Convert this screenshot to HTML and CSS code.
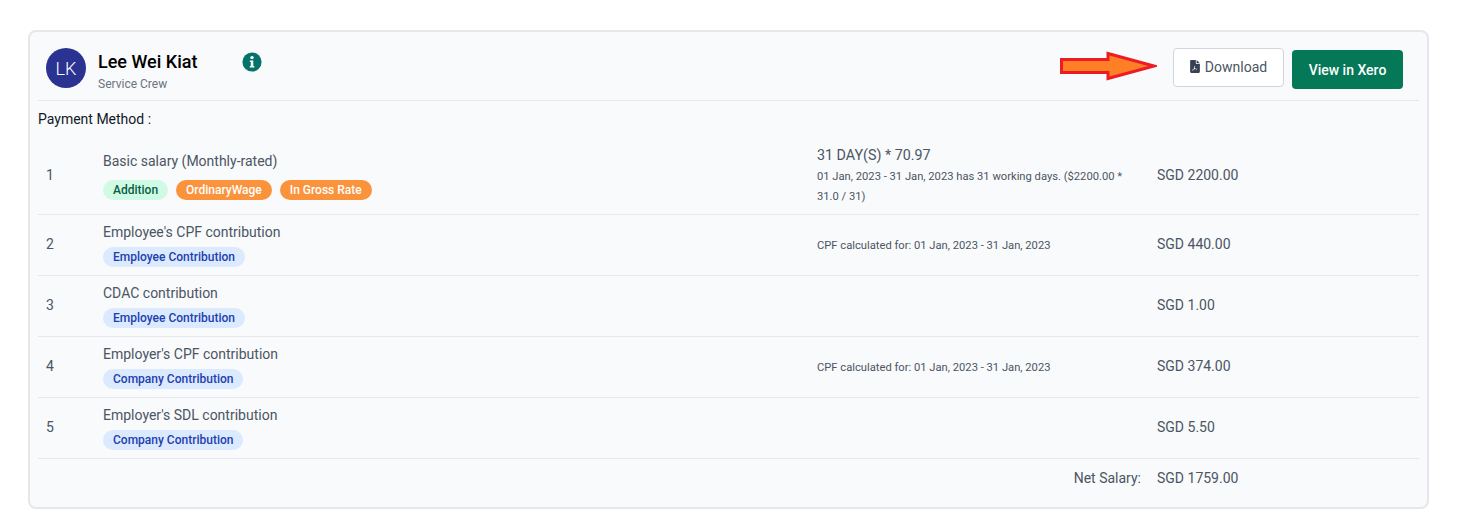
FILE: index.html
```html
<!DOCTYPE html>
<html lang="en">
<head>
<meta charset="utf-8">
<title>Payslip</title>
<link rel="stylesheet" href="styles.css">
</head>
<body>
<section class="card">
  <header class="head">
    <div class="avatar">LK</div>
    <div class="who">
      <div class="name">Lee Wei Kiat</div>
      <div class="role">Service Crew</div>
    </div>
    <svg class="info" viewBox="0 0 20 20" width="20" height="20"><circle cx="10" cy="10" r="9.6" fill="#04746a"/><circle cx="10" cy="5.6" r="1.7" fill="#fff"/><path d="M7.800 8.600h3.500v5.300h1v1.500H7.800v-1.500h1v-3.800h-1z" fill="#fff"/></svg>
    <div class="actions">
      <svg class="arrow" viewBox="0 0 98 30" width="98" height="30"><path d="M2.500 8.500H49V2.500L95 15 49 27.500V21.500H2.500z" fill="#ff7f27" stroke="#ed1c24" stroke-width="3"/></svg>
      <button class="btn btn-light"><svg viewBox="0 0 384 512" width="10" height="13"><path fill="#374151" d="M224 0H48C22 0 0 22 0 48v416c0 26 22 48 48 48h288c26 0 48-22 48-48V160H256c-18 0-32-14-32-32zm32 0v128h128zM96 416c-20 0-24-14-6-28 14-10 32-18 44-22 12-20 24-46 30-66-10-26-14-50-6-62 8-10 24-6 26 14 2 12-2 30-6 48 10 20 24 36 38 46 22-2 50-2 58 10 8 14-6 24-22 22-14-2-30-10-46-22-20 2-44 10-64 18-16 28-32 42-46 42z"/></svg>Download</button>
      <button class="btn btn-green">View in Xero</button>
    </div>
  </header>
  <div class="method">Payment Method :</div>
  <div class="row row-first">
    <div class="num">1</div>
    <div class="item">
      <div class="label">Basic salary (Monthly-rated)</div>
      <div class="tags"><span class="tag tag-green">Addition</span><span class="tag tag-orange">OrdinaryWage</span><span class="tag tag-orange">In Gross Rate</span></div>
    </div>
    <div class="detail">
      <div class="calc">31 DAY(S) * 70.97</div>
      <div class="note note-wrap">01 Jan, 2023 - 31 Jan, 2023 has 31 working days. ($2200.00 * 31.0 / 31)</div>
    </div>
    <div class="amount">SGD 2200.00</div>
  </div>
  <div class="row">
    <div class="num">2</div>
    <div class="item">
      <div class="label">Employee's CPF contribution</div>
      <div class="tags"><span class="tag tag-blue">Employee Contribution</span></div>
    </div>
    <div class="detail"><div class="note">CPF calculated for: 01 Jan, 2023 - 31 Jan, 2023</div></div>
    <div class="amount">SGD 440.00</div>
  </div>
  <div class="row">
    <div class="num">3</div>
    <div class="item">
      <div class="label">CDAC contribution</div>
      <div class="tags"><span class="tag tag-blue">Employee Contribution</span></div>
    </div>
    <div class="detail"></div>
    <div class="amount">SGD 1.00</div>
  </div>
  <div class="row">
    <div class="num">4</div>
    <div class="item">
      <div class="label">Employer's CPF contribution</div>
      <div class="tags"><span class="tag tag-blue">Company Contribution</span></div>
    </div>
    <div class="detail"><div class="note">CPF calculated for: 01 Jan, 2023 - 31 Jan, 2023</div></div>
    <div class="amount">SGD 374.00</div>
  </div>
  <div class="row">
    <div class="num">5</div>
    <div class="item">
      <div class="label">Employer's SDL contribution</div>
      <div class="tags"><span class="tag tag-blue">Company Contribution</span></div>
    </div>
    <div class="detail"></div>
    <div class="amount">SGD 5.50</div>
  </div>
  <div class="total">
    <div class="total-label">Net Salary:</div>
    <div class="amount">SGD 1759.00</div>
  </div>
</section>
</body>
</html>
```
FILE: styles.css
```css
* { box-sizing: border-box; }
html, body { margin: 0; background: #fff; }
body {
  padding: 30px 41px 0 28px;
  font-family: Roboto, "Liberation Sans", sans-serif;
  color: #4b5563;
  font-size: 14px;
}
.card {
  height: 479px;
  background: #f9fafb;
  border: 2px solid #e5e7eb;
  border-radius: 8px;
  padding: 0 8px;
}
.head {
  display: flex;
  align-items: flex-start;
  height: 69px;
  padding: 16px 8px 0;
  border-bottom: 1px solid #e5e7eb;
}
.avatar {
  width: 40px;
  height: 40px;
  border-radius: 50%;
  background: #2a3392;
  color: #fff;
  font-size: 18px;
  font-weight: 300;
  display: flex;
  align-items: center;
  justify-content: center;
  flex: none;
}
.who { margin-left: 12px; width: 144px; flex: none; }
.name { font-size: 18px; font-weight: 500; line-height: 28px; color: #000; }
.role { font-size: 12px; line-height: 16px; color: #6b7280; }
.info { margin-top: 4px; flex: none; }
.actions { margin-left: auto; margin-right: 8px; display: flex; align-items: flex-start; }
.arrow { margin: 3px 16px 0 0; flex: none; }
.btn {
  font-family: inherit;
  font-size: 14px;
  height: 39px;
  border-radius: 4px;
  display: inline-flex;
  align-items: center;
  justify-content: center;
}
.btn-light {
  width: 111px;
  background: #fff;
  border: 1px solid #d1d5db;
  color: #4b5563;
  margin: 0 8px 0 0;
  padding: 0 0 2px;
  gap: 5px;
}
.btn-green {
  width: 111px;
  background: #047857;
  border: 0;
  color: #fff;
  font-weight: 500;
  margin-top: 2px;
}
.method { color: #111827; line-height: 20px; padding-top: 8px; height: 38px; }
.row {
  display: grid;
  grid-template-columns: 65px 714px 340px 1fr;
  align-items: center;
  height: 61px;
  padding-bottom: 2px;
  border-bottom: 1px solid #e5e7eb;
}
.row-first { height: 76px; padding-bottom: 4px; }
.row-first .item, .row-first .detail { padding-top: 2px; }
.row-first .tags { margin-top: 9px; }
.num { padding-left: 8px; }
.label { line-height: 20px; }
.tags { display: flex; gap: 8px; margin-top: 5px; }
.tag {
  font-size: 12px;
  font-weight: 500;
  line-height: 20px;
  padding: 0 10px;
  border-radius: 10px;
}
.tag-green { background: #d1fae5; color: #065f46; }
.tag-orange { background: #fb923c; color: #fff; }
.tag-blue { background: #dbeafe; color: #1e40af; }
.calc { line-height: 20px; font-size: 14.3px; }
.note { font-size: 11.2px; line-height: 20px; padding-top: 4px; color: #4b5563; }
.note-wrap { width: 320px; margin-top: 2px; padding-top: 0; }
.total { display: grid; grid-template-columns: 1103px 1fr; column-gap: 16px; height: 38px; align-items: center; }
.total-label { text-align: right; }
```
